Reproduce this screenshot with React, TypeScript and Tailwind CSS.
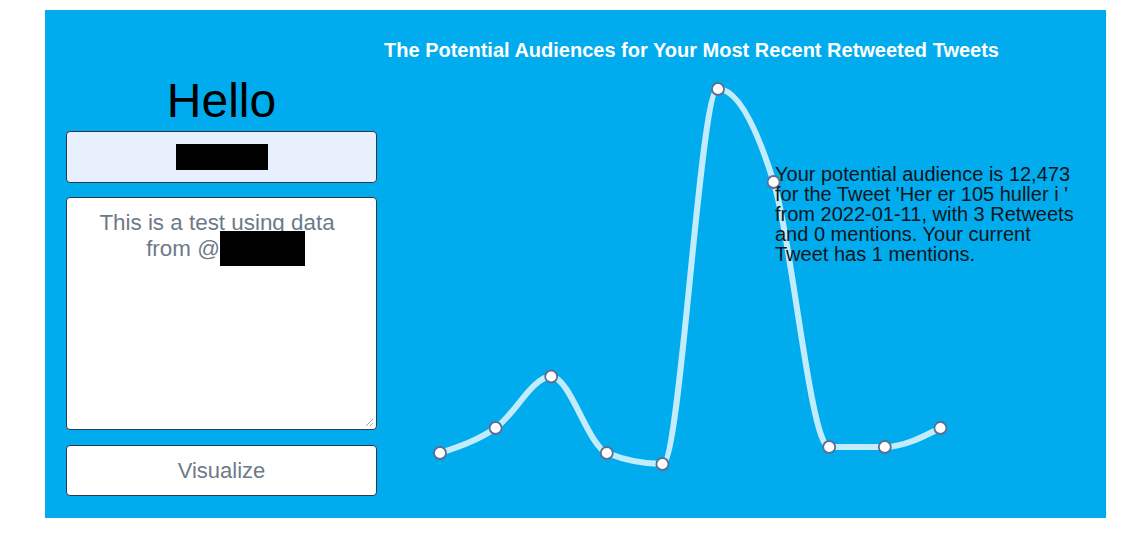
const pts: [number, number][] = [
  [440, 453],
  [495.6, 428],
  [551.2, 376.5],
  [606.8, 453],
  [662.4, 464],
  [718, 89],
  [773.6, 182],
  [829.2, 447],
  [884.8, 447],
  [940.4, 428],
];

// monotone-x curve, same maths as d3.curveMonotoneX
function monotonePath(p: [number, number][]) {
  const n = p.length;
  const s: number[] = [];
  for (let i = 0; i < n - 1; i++) s.push((p[i + 1][1] - p[i][1]) / (p[i + 1][0] - p[i][0]));
  const t: number[] = new Array(n).fill(0);
  for (let i = 1; i < n - 1; i++) {
    const h0 = p[i][0] - p[i - 1][0];
    const h1 = p[i + 1][0] - p[i][0];
    const q = (s[i - 1] * h1 + s[i] * h0) / (h0 + h1);
    t[i] = (Math.sign(s[i - 1]) + Math.sign(s[i])) * Math.min(Math.abs(s[i - 1]), Math.abs(s[i]), 0.5 * Math.abs(q)) || 0;
  }
  t[0] = (3 * s[0] - t[1]) / 2;
  t[n - 1] = (3 * s[n - 2] - t[n - 2]) / 2;
  let d = `M${p[0][0]},${p[0][1]}`;
  for (let i = 0; i < n - 1; i++) {
    const dx = (p[i + 1][0] - p[i][0]) / 3;
    d += `C${p[i][0] + dx},${p[i][1] + dx * t[i]},${p[i + 1][0] - dx},${p[i + 1][1] - dx * t[i + 1]},${p[i + 1][0]},${p[i + 1][1]}`;
  }
  return d;
}

const tipLines = [
  "Your potential audience is 12,473",
  "for the Tweet 'Her er 105 huller i '",
  "from 2022-01-11, with 3 Retweets",
  "and 0 mentions. Your current",
  "Tweet has 1 mentions.",
];

export default function App() {
  return (
    <div className="w-[1140px] h-[548px] bg-white pt-[10px] pl-[45px] font-['Liberation_Sans',Arial,sans-serif]">
      <div className="w-[1061px] h-[508px] bg-[#00acee] flex">
        <div className="ml-[21px] w-[311px] flex flex-col">
          <h1 className="mt-[67px] text-[48px] leading-[48px] text-center text-black">Hello</h1>
          <div className="mt-[6px] h-[52px] bg-[#e8f0fe] border border-[#2b3a4a] rounded-[4px] flex items-center justify-center">
            <span className="block w-[92px] h-[26px] bg-black"></span>
          </div>
          <div className="relative mt-[14px] h-[233px] bg-white border border-[#2b3a4a] rounded-[4px] pt-[12px] text-center text-[22.4px] leading-[26px] text-[#6e7a88]">
            <div className="pr-[9px]">This is a test using data</div>
            <div className="pl-[8px]">
              from @<span className="inline-block align-top -mt-[5px] w-[85px] h-[35px] bg-black"></span>
            </div>
            <svg className="absolute right-[2px] bottom-[2px]" width="10" height="10" viewBox="0 0 10 10">
              <line x1="9" y1="2" x2="2" y2="9" stroke="#9ca3af" strokeWidth="1" />
              <line x1="9" y1="6" x2="6" y2="9" stroke="#9ca3af" strokeWidth="1" />
            </svg>
          </div>
          <button className="mt-[15px] h-[51px] bg-white border border-[#2b3a4a] rounded-[4px] text-[22px] text-[#6e7a88]">
            Visualize
          </button>
        </div>
        <div className="ml-[3px] w-[623px] flex flex-col">
          <h2 className="mt-[28px] text-[20px] leading-[24px] font-bold text-white text-center">
            The Potential Audiences for Your Most Recent Retweeted Tweets
          </h2>
          <svg width="623" height="446" viewBox="380 62 623 446" className="overflow-visible">
            <path d={monotonePath(pts)} fill="none" stroke="#c2ecfb" strokeWidth="6" />
            {pts.map(([x, y], i) => (
              <circle key={i} cx={x} cy={y} r="6" fill="white" stroke="#5b6f92" strokeWidth="1.8" />
            ))}
            <text x="775" y="181" fontSize="20" fill="#0d1620" fontFamily="'Liberation Sans', Arial, sans-serif">
              {tipLines.map((l, i) => (
                <tspan key={i} x="775" y={181 + i * 20}>
                  {l}
                </tspan>
              ))}
            </text>
          </svg>
        </div>
      </div>
    </div>
  );
}
